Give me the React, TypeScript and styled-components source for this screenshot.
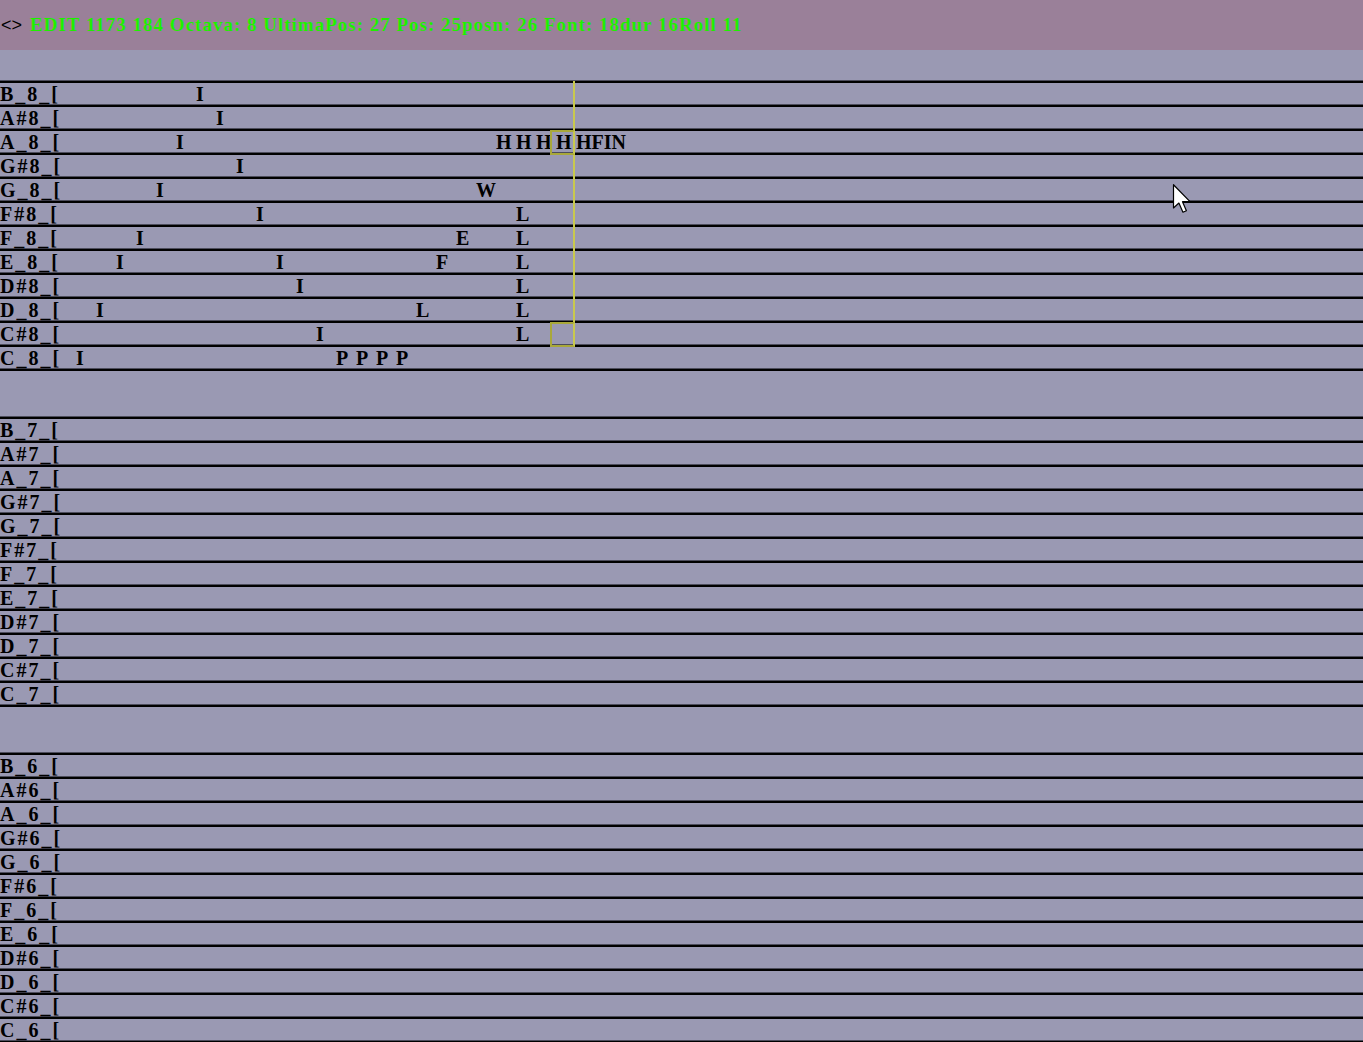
import React from "react";
import styled, { createGlobalStyle } from "styled-components";

const Global = createGlobalStyle`
  html, body { margin: 0; padding: 0; background: #9a99b3; }
  body { font-family: "Liberation Serif", "Times New Roman", serif; overflow: hidden; }
`;

const Page = styled.div`
  display: flex;
  flex-direction: column;
  width: 1363px;
  height: 1042px;
  background: #9a99b3;
  position: relative;
  overflow: hidden;
  & > * { flex-shrink: 0; }
`;

const Header = styled.div`
  height: 50px;
  background: #9a8099;
  display: flex;
  align-items: center;
  white-space: nowrap;
`;

const Arrows = styled.span`
  font-family: "Liberation Sans", sans-serif;
  font-size: 18px;
  color: #000;
  margin-left: 1px;
  margin-right: 8px;
`;

const Status = styled.span`
  font-family: "Liberation Serif", serif;
  font-size: 19px;
  font-weight: bold;
  color: #1ef000;
  letter-spacing: 1px;
`;

const Spacer = styled.div`
  height: 30px;
`;

const Groups = styled.div`
  display: flex;
  flex-direction: column;
  gap: 45px;
`;

const Group = styled.div`
  position: relative;
`;

const TopLine = styled.div`
  height: 1px;
  border-bottom: 2px solid #000;
  background: #4d4d5c;
`;

const Row = styled.div`
  height: 22px;
  border-bottom: 2px solid #000;
  box-shadow: inset 0 -1px 0 #4d4d5c;
  display: grid;
  grid-template-columns: 76px repeat(26, 20px);
  align-items: center;
  font-weight: bold;
  font-size: 20px;
  line-height: 21px;
  color: #000;
`;

const Label = styled.div`
  grid-column: 1;
  grid-row: 1;
  letter-spacing: 2px;
  white-space: nowrap;
`;

const Note = styled.div<{ $col: number }>`
  grid-column: ${(p) => p.$col + 2};
  grid-row: 1;
  white-space: nowrap;
  overflow: visible;
`;

const CursorLine = styled.div`
  position: absolute;
  left: 573px;
  top: 1px;
  width: 2px;
  height: 265px;
  background: #c9c94e;
`;

const CursorBox = styled.div<{ $top: number }>`
  position: absolute;
  left: 550px;
  top: ${(p) => p.$top}px;
  width: 21px;
  height: 21px;
  border: 2px solid #a9a83a;
  border-right-color: #c9c94e;
`;

const Pointer = styled.svg`
  position: absolute;
  left: 1172px;
  top: 183px;
`;

type NoteT = [number, string];
const noteNames = ["B", "A#", "A", "G#", "G", "F#", "F", "E", "D#", "D", "C#", "C"];

const label = (n: string, o: number) => (n.length === 1 ? `${n}_${o}_[` : `${n}${o}_[`);

const octave8: NoteT[][] = [
  [[6, "I"]],
  [[7, "I"]],
  [[5, "I"], [21, "H"], [22, "H"], [23, "H"], [24, "H"], [25, "HFIN"]],
  [[8, "I"]],
  [[4, "I"], [20, "W"]],
  [[9, "I"], [22, "L"]],
  [[3, "I"], [19, "E"], [22, "L"]],
  [[2, "I"], [10, "I"], [18, "F"], [22, "L"]],
  [[11, "I"], [22, "L"]],
  [[1, "I"], [17, "L"], [22, "L"]],
  [[12, "I"], [22, "L"]],
  [[0, "I"], [13, "P"], [14, "P"], [15, "P"], [16, "P"]],
];

const empty: NoteT[][] = noteNames.map(() => []);

const octaves: { o: number; notes: NoteT[][] }[] = [
  { o: 8, notes: octave8 },
  { o: 7, notes: empty },
  { o: 6, notes: empty },
];

export default function App() {
  return (
    <>
      <Global />
      <Page>
        <Header>
          <Arrows>&lt;&gt;</Arrows>
          <Status>EDIT 1173 184 Octava: 8 UltimaPos: 27 Pos: 25posn: 26 Font: 18dur 16Roll 11</Status>
        </Header>
        <Spacer />
        <Groups>
          {octaves.map(({ o, notes }) => (
            <Group key={o}>
              <TopLine />
              {noteNames.map((n, i) => (
                <Row key={n}>
                  <Label>{label(n, o)}</Label>
                  {notes[i].map(([c, t]) => (
                    <Note key={c} $col={c}>
                      {t}
                    </Note>
                  ))}
                </Row>
              ))}
              {o === 8 && (
                <>
                  <CursorLine />
                  <CursorBox $top={50} />
                  <CursorBox $top={242} />
                </>
              )}
            </Group>
          ))}
        </Groups>
        <Pointer width="21" height="32" viewBox="0 0 14 21">
          <path d="M1 1 L1 16.5 L4.6 13.2 L7.3 19.3 L9.6 18.3 L7 12.3 L12 12.3 Z" fill="#fff" stroke="#000" strokeWidth="0.8" strokeLinejoin="round" />
        </Pointer>
      </Page>
    </>
  );
}
